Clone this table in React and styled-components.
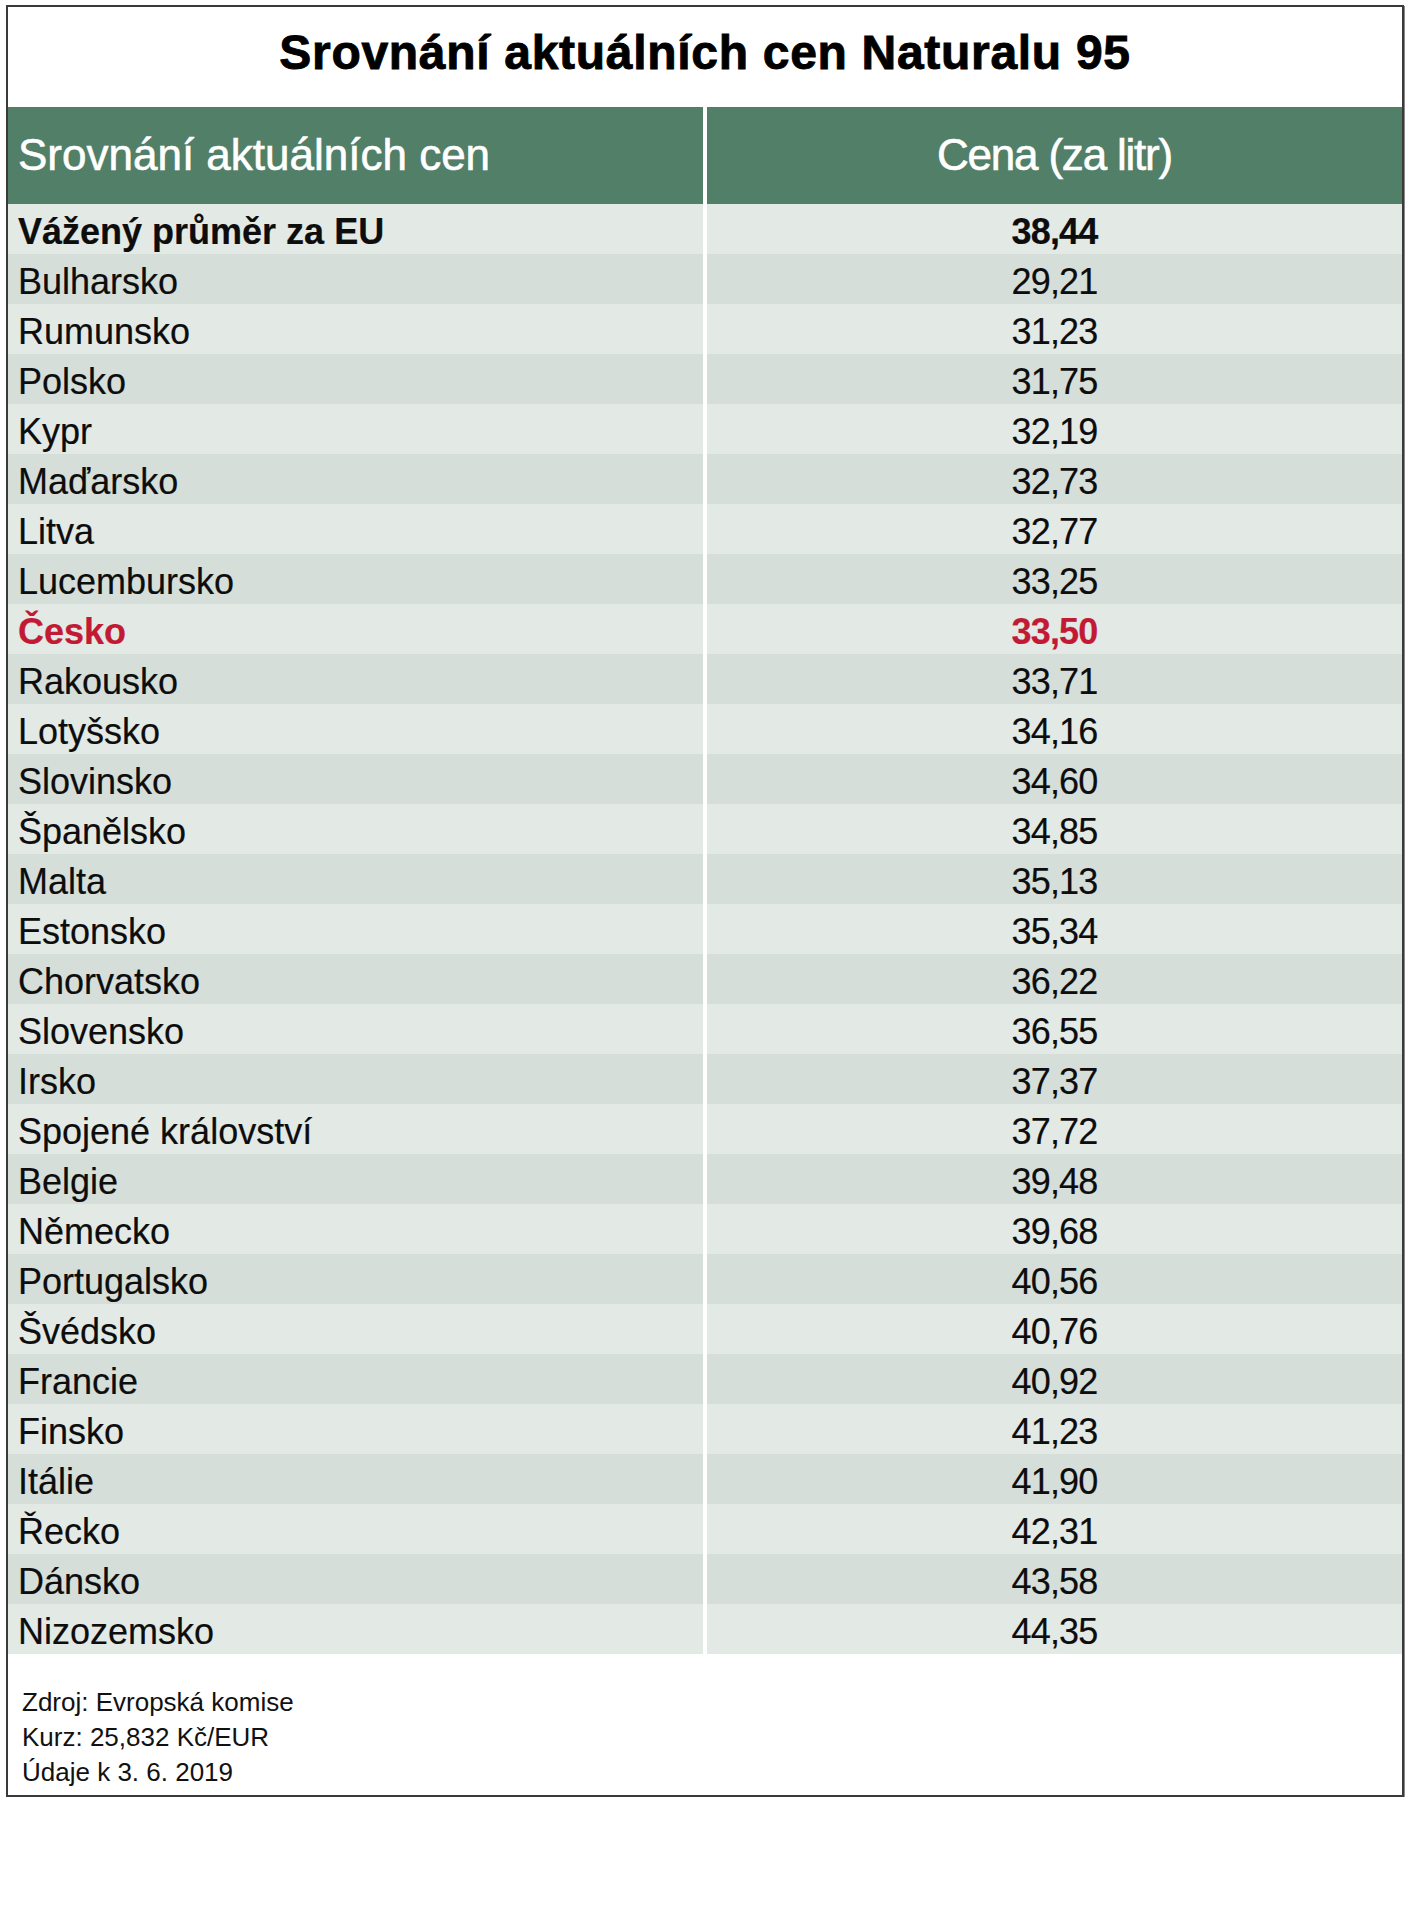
import styled, { createGlobalStyle } from "styled-components";

const GlobalStyle = createGlobalStyle`
  body {
    margin: 0;
    background: #fff;
    font-family: "Liberation Sans", Arial, sans-serif;
  }
`;

const rows = [
  ["Bulharsko", "29,21"],
  ["Rumunsko", "31,23"],
  ["Polsko", "31,75"],
  ["Kypr", "32,19"],
  ["Maďarsko", "32,73"],
  ["Litva", "32,77"],
  ["Lucembursko", "33,25"],
  ["Česko", "33,50", true],
  ["Rakousko", "33,71"],
  ["Lotyšsko", "34,16"],
  ["Slovinsko", "34,60"],
  ["Španělsko", "34,85"],
  ["Malta", "35,13"],
  ["Estonsko", "35,34"],
  ["Chorvatsko", "36,22"],
  ["Slovensko", "36,55"],
  ["Irsko", "37,37"],
  ["Spojené království", "37,72"],
  ["Belgie", "39,48"],
  ["Německo", "39,68"],
  ["Portugalsko", "40,56"],
  ["Švédsko", "40,76"],
  ["Francie", "40,92"],
  ["Finsko", "41,23"],
  ["Itálie", "41,90"],
  ["Řecko", "42,31"],
  ["Dánsko", "43,58"],
  ["Nizozemsko", "44,35"],
];

export default function App() {
  return (
    <>
      <GlobalStyle />
      <Frame>
        <Title>Srovnání aktuálních cen Naturalu 95</Title>
        <Table>
          <HeadCell>Srovnání aktuálních cen</HeadCell>
          <HeadCell $center $narrow>
            Cena (za litr)
          </HeadCell>

          <Cell $odd={false} $bold>
            Vážený průměr za EU
          </Cell>
          <Cell $odd={false} $bold $center>
            38,44
          </Cell>

          {rows.map(([name, price, highlight], i) => (
            <Row key={name}>
              <Cell $odd={i % 2 === 0} $bold={highlight} $red={highlight}>
                {name}
              </Cell>
              <Cell
                $odd={i % 2 === 0}
                $bold={highlight}
                $red={highlight}
                $center
              >
                {price}
              </Cell>
            </Row>
          ))}
        </Table>
        <Footer>
          <div>Zdroj: Evropská komise</div>
          <div>Kurz: 25,832 Kč/EUR</div>
          <div>Údaje k 3. 6. 2019</div>
        </Footer>
      </Frame>
    </>
  );
}

const Frame = styled.div`
  width: 1394px;
  margin: 5px 0 0 6px;
  border: 2px solid #3a3a3a;
  box-shadow: 1px 1px 0 #8a8a8a;
  background: #fff;
`;

const Title = styled.h1`
  margin: 0;
  height: 100px;
  padding-top: 4px;
  box-sizing: border-box;
  line-height: 84px;
  text-align: center;
  font-size: 48px;
  font-weight: 700;
  letter-spacing: 0.7px;
  color: #000;
  -webkit-text-stroke: 0.9px #000;
`;

const Table = styled.div`
  display: grid;
  grid-template-columns: 1fr 1fr;
  column-gap: 4px;
  background: #fff;
`;

const Row = styled.div`
  display: contents;
`;

const HeadCell = styled.div`
  height: 97px;
  box-sizing: border-box;
  padding: 1px 10px 0;
  line-height: 93px;
  background: #517f67;
  color: #fff;
  font-size: 44px;
  text-align: ${(p) => (p.$center ? "center" : "left")};
  letter-spacing: ${(p) => (p.$narrow ? "-1.2px" : "0")};
  -webkit-text-stroke: 0.6px #fff;
`;

const Cell = styled.div`
  height: 50px;
  box-sizing: border-box;
  padding: 6px 10px 0;
  line-height: 44px;
  font-size: 36px;
  font-weight: ${(p) => (p.$bold ? 700 : 400)};
  color: ${(p) => (p.$red ? "#c21a35" : "#0d0d0d")};
  background: ${(p) => (p.$odd ? "#d5ded8" : "#e3e9e5")};
  text-align: ${(p) => (p.$center ? "center" : "left")};
  letter-spacing: ${(p) => (p.$center ? "-0.8px" : "0")};
  -webkit-text-stroke: 0.2px currentColor;
`;

const Footer = styled.div`
  padding: 31px 14px 5px;
  font-size: 26px;
  line-height: 35px;
  color: #111;
`;
